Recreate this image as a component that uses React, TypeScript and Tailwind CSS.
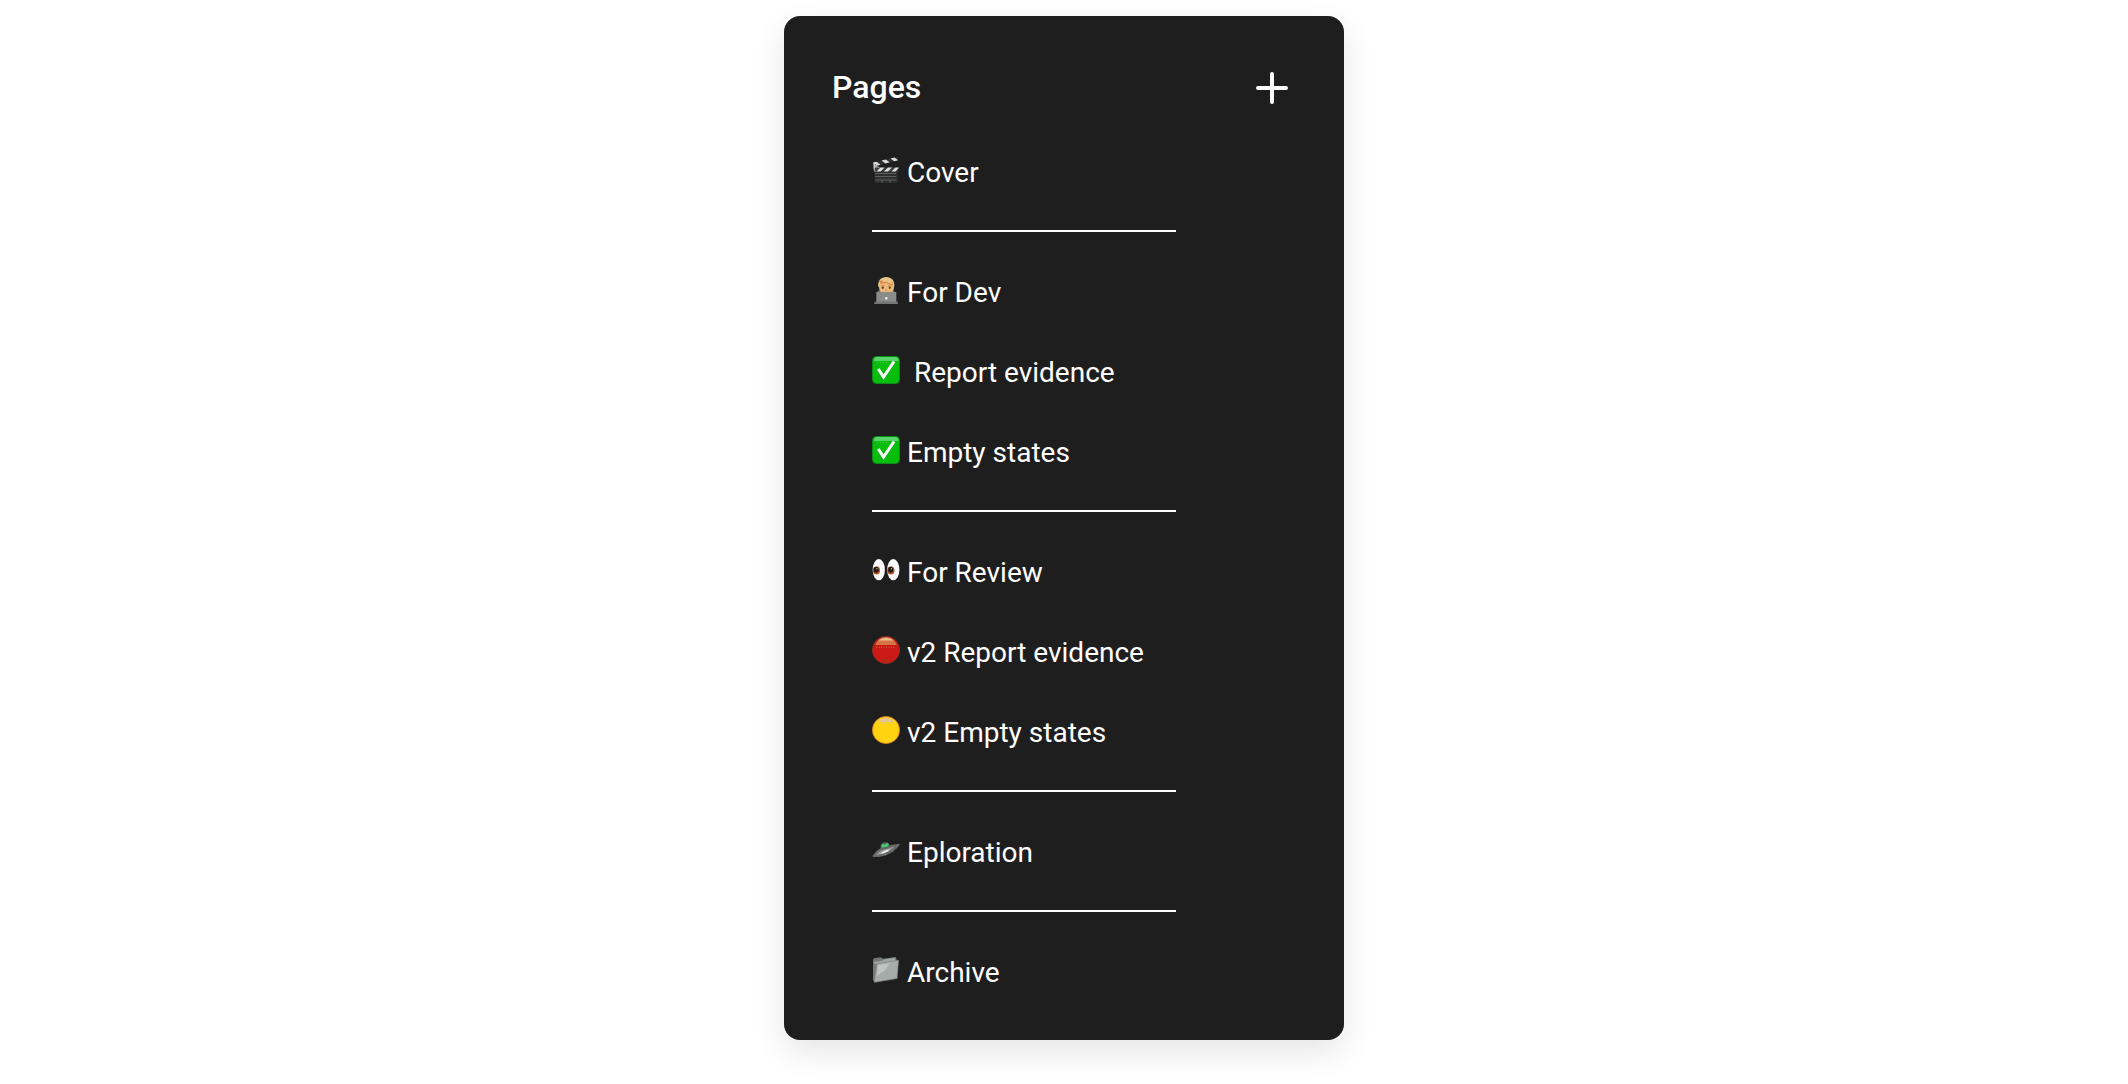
import type { ReactNode } from 'react';

type Page = {
  id: string;
  label: string;
  icon: ReactNode;
};

function Icon({ children }: { children: ReactNode }) {
  return (
    <svg viewBox="0 0 28 28" className="mb-1 size-7 shrink-0" aria-hidden="true">
      {children}
    </svg>
  );
}

const clapper = (
  <Icon>
    <path d="M2 14.5h23.5V27H3z" fill="#2e302f" />
    <path d="M3 17.5h21M3 20.5h21M3 24h21" stroke="#686b6a" strokeWidth="0.8" />
    <path d="M10 24v3M18 24v3" stroke="#686b6a" strokeWidth="0.8" />
    <path d="M1 6.5 25.5 1l.7 3.3L2 10.5z" fill="#303231" />
    <path d="M1 6.5l3.5-.8 4 3-6.5 1.8zM9.5 4.6l4.2-1 4 2.7-4.2 1.1zM18.5 2.5l4-.9 3.7 2.7-4 1z" fill="#d9dcda" />
    <path d="M1.2 9.5 8 11l-4 5-2-.5z" fill="#bfc3c1" />
    <path d="M3 11.5h24l-1 4H2.5z" fill="#3c3f3d" />
    <path d="M8.5 11.5h4l-4 4h-4zM16 11.5h4l-4 4h-4zM23.5 11.5H27l-3.5 4h-4z" fill="#dcdfdd" />
    <circle cx="3.5" cy="8.8" r="0.8" fill="#777" />
  </Icon>
);

const developer = (
  <Icon>
    <path d="M5 17c0-2 2-3 4-3h10c2 0 4 1 4 3z" fill="#747674" />
    <rect x="7" y="4" width="15" height="14" rx="6.5" fill="#edb979" />
    <path d="M6.3 11C5.5 4.5 9 1 14.2 1s9 3.5 8 10l-1.4-1.5-.5-3.2-8.7-1.2-3.3 2-.3 3z" fill="#e4c589" />
    <path d="m7.3 5.5 3.2-.5-1.8 2.2 6-.8 2.4 1.5 3.8.6" fill="none" stroke="#db7838" strokeWidth="0.9" />
    <path d="M9 10h3.5M16 10h3.5" stroke="#b4652f" strokeWidth="0.8" />
    <circle cx="10.8" cy="11.8" r="1.1" fill="#493d32" />
    <circle cx="17.8" cy="11.8" r="1.1" fill="#493d32" />
    <path d="M13.3 14h2" stroke="#c77742" strokeWidth="0.8" />
    <path d="M4.3 16h20v10h-20z" fill="#898c8b" />
    <path d="M3 25.5h22.5L26 28H2z" fill="#737574" />
    <circle cx="14.3" cy="22.3" r="1.2" fill="#f5f5f5" />
  </Icon>
);

const check = (
  <Icon>
    <rect x="0.5" y="0.5" width="27" height="27" rx="4" fill="#08bd0b" stroke="#078d13" />
    <path d="M4.5 1h19C25.500 1 26.500 2.500 26.500 5H2c0-2.500.7-4 2.500-4z" fill="#5bd36d" />
    <path d="M5 6.5h12" stroke="#5bd36d" strokeWidth="0.8" strokeDasharray="1 2" />
    <path d="m6.300 13 5.200 8L22 5.500" fill="none" stroke="#fff" strokeWidth="3" />
  </Icon>
);

const eyes = (
  <Icon>
    <ellipse cx="6.8" cy="13.7" rx="6.1" ry="10.6" fill="#fafafa" />
    <ellipse cx="21.3" cy="13.7" rx="6.1" ry="10.6" fill="#fafafa" />
    <ellipse cx="4.4" cy="14.4" rx="3.6" ry="4" fill="#b8501f" />
    <ellipse cx="18.9" cy="14.4" rx="3.6" ry="4" fill="#b8501f" />
    <ellipse cx="4.2" cy="13.8" rx="2.5" ry="3" fill="#211b19" />
    <ellipse cx="18.7" cy="13.8" rx="2.5" ry="3" fill="#211b19" />
    <circle cx="4.9" cy="12.7" r="0.6" fill="#ddd" />
    <circle cx="19.4" cy="12.7" r="0.6" fill="#ddd" />
  </Icon>
);

const redCircle = (
  <Icon>
    <circle cx="14" cy="14" r="13.6" fill="#cb1916" stroke="#963125" strokeWidth="0.8" />
    <path d="M3.3 9C5 4.5 9 1 14 1s9 3.5 10.7 8z" fill="#d87545" />
    <path d="M6.5 4.5C10 1 18 1 21.5 4.5z" fill="#e6c38b" />
    <path d="M4 11.3h20" stroke="#d87545" strokeWidth="0.8" strokeDasharray="1 1.5" />
    <path d="M7 23.5h14M9 25.5h10" stroke="#84421c" strokeWidth="0.8" strokeDasharray="1 1.5" />
  </Icon>
);

const yellowCircle = (
  <Icon>
    <circle cx="14" cy="14" r="13.6" fill="#ffd310" stroke="#d87a2b" strokeWidth="0.8" />
    <path d="M5.5 6.3C9 .2 19 .2 22.5 6.3z" fill="#e5c58b" />
    <path d="M7 7.5h14" stroke="#e5c58b" strokeWidth="0.8" strokeDasharray="1 1.5" />
  </Icon>
);

const ufo = (
  <Icon>
    <path d="M8.5 11C8 5.5 16.5 4.5 17.5 9l-1 3-7 1.5z" fill="#55675c" />
    <path d="m9.5 9.2 1.5-1.7 1.5 1.5 3-2.2 1.500 2-2 2-5.500 1z" fill="#47c76b" />
    <path d="M.3 20.500C2 17 6 13.500 9 12c3 1 7 0 8.500-2.500C21 8.500 25 8 28 8c-1.500 3.200-7 8.200-13 10.700C9.500 21 3 21.700.3 20.500z" fill="#686a69" />
    <path d="M4 18.700c3-3.400 6-4.800 8.500-5.200 4-.5 7-2.500 10-3.500-3 4.500-11 9-18.500 8.700z" fill="#999c9a" />
    <path d="M8.500 17.500c2-2.500 6-3.800 9-4.300-1.500 2.700-6 4.500-9 4.300z" fill="#f0f0f0" />
    <path d="m20.500 15.500 1-.5M13 19l1-.4" stroke="#47c76b" />
  </Icon>
);

const folder = (
  <Icon>
    <path d="m1 4 1-1.800 7-1 1.800 1.500L23.500 1l1 1.500L24 22 2.500 26 1 24z" fill="#747a78" />
    <path d="M2 6 10.500 4.800l1-1.300 11.500-1.500v3L3 8z" fill="#a2a8a5" />
    <path d="m4.800 7.700 21.700-3.500L25 22.500 2.300 26.300z" fill="#a6acaa" stroke="#818785" strokeWidth="0.7" />
    <path d="m6 9 12-1.800-5 7L4.800 20z" fill="#c0c4c2" />
  </Icon>
);

const groups: Page[][] = [
  [{ id: 'cover', label: 'Cover', icon: clapper }],
  [
    { id: 'for-dev', label: 'For Dev', icon: developer },
    { id: 'report-evidence', label: ' Report evidence', icon: check },
    { id: 'empty-states', label: 'Empty states', icon: check },
  ],
  [
    { id: 'for-review', label: 'For Review', icon: eyes },
    { id: 'v2-report-evidence', label: 'v2 Report evidence', icon: redCircle },
    { id: 'v2-empty-states', label: 'v2 Empty states', icon: yellowCircle },
  ],
  [{ id: 'exploration', label: 'Eploration', icon: ufo }],
  [{ id: 'archive', label: 'Archive', icon: folder }],
];

export default function App() {
  return (
    <main className="flex min-h-screen items-start justify-center bg-white py-4 font-['Roboto',sans-serif] text-white">
      <section
        aria-labelledby="pages-title"
        className="w-full max-w-[560px] rounded-2xl bg-[#1e1e1e] px-12 pt-12 pb-7 shadow-[0_12px_32px_rgba(0,0,0,0.1)]"
      >
        <header className="flex h-12 items-center justify-between">
          <h1 id="pages-title" className="pb-0.5 text-[32px] leading-10 font-medium">
            Pages
          </h1>
          <button type="button" aria-label="Add page" className="flex size-12 items-center justify-center">
            <svg viewBox="0 0 32 32" className="size-8" fill="none" stroke="currentColor" strokeWidth="4" strokeLinecap="round">
              <path d="M16 2v28M2 16h28" />
            </svg>
          </button>
        </header>
        <nav aria-labelledby="pages-title" className="mt-5 pl-10">
          {groups.map((pages, i) => (
            <div key={pages[0].id}>
              {i > 0 && <hr className="mt-[18px] mb-5 w-[304px] border-t-2 border-white" />}
              <ul>
                {pages.map((page) => (
                  <li key={page.id}>
                    <a href={`#${page.id}`} className="flex h-20 items-center gap-[7px] text-[28px] leading-10">
                      {page.icon}
                      <span className="pt-0.5 whitespace-pre">{page.label}</span>
                    </a>
                  </li>
                ))}
              </ul>
            </div>
          ))}
        </nav>
      </section>
    </main>
  );
}
